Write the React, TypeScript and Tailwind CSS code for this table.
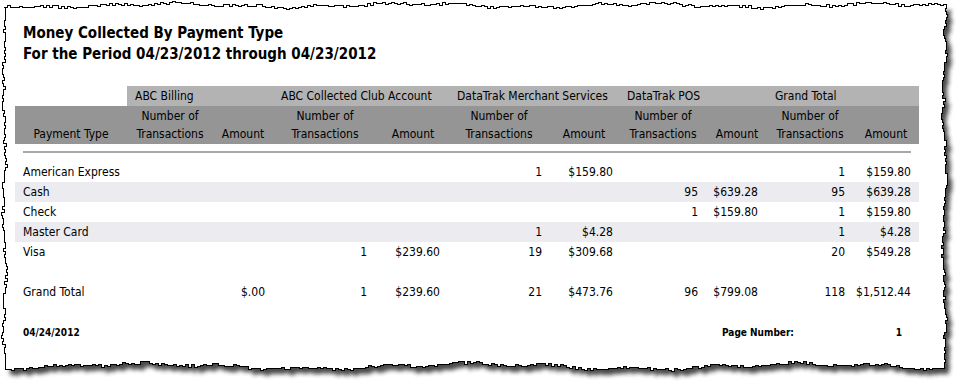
import React from "react";

const font = { fontFamily: "'DejaVu Sans Condensed', 'DejaVu Sans', sans-serif" };

// column grid shared by header, rows and totals
const grid =
  "grid grid-cols-[112px_86px_60px_104px_72px_100px_70px_88px_60px_86px_66px]";

// right padding of each data column so numbers line up with the print
const pad = [
  "pl-2",
  "pr-2",
  "pr-2",
  "pr-[10px]",
  "pr-[9px]",
  "pr-[7px]",
  "pr-[6px]",
  "pr-[9px]",
  "pr-[9px]",
  "pr-2",
  "pr-2",
];

type Row = { label: string; cells: string[]; shaded?: boolean };

const rows: Row[] = [
  { label: "American Express", cells: ["", "", "", "", "1", "$159.80", "", "", "1", "$159.80"] },
  { label: "Cash", cells: ["", "", "", "", "", "", "95", "$639.28", "95", "$639.28"], shaded: true },
  { label: "Check", cells: ["", "", "", "", "", "", "1", "$159.80", "1", "$159.80"] },
  { label: "Master Card", cells: ["", "", "", "", "1", "$4.28", "", "", "1", "$4.28"], shaded: true },
  { label: "Visa", cells: ["", "", "1", "$239.60", "19", "$309.68", "", "", "20", "$549.28"] },
];

const total: Row = {
  label: "Grand Total",
  cells: ["", "$.00", "1", "$239.60", "21", "$473.76", "96", "$799.08", "118", "$1,512.44"],
};

const groups = [
  "ABC Billing",
  "ABC Collected Club Account",
  "DataTrak Merchant Services",
  "DataTrak POS",
  "Grand Total",
];

function rnd(i: number) {
  const x = Math.sin(i * 127.1 + 311.7) * 43758.5453;
  return x - Math.floor(x);
}

// torn paper outline, stair-stepped like the captured edge
function tornPath() {
  const pts: [number, number][] = [];
  let i = 0;
  for (let x = 4; x <= 944; x += 3) {
    const y = 5 + 1.6 * Math.sin(x / 37) + 1.1 * Math.sin(x / 11 + 1) + (rnd(i++) - 0.5) * 2.6;
    pts.push([x, Math.round(y)]);
  }
  for (let y = 8; y <= 362; y += 3) {
    const x = 944 + 1.4 * Math.sin(y / 23) + 0.8 * Math.sin(y / 7) + (rnd(i++) - 0.5) * 2.6;
    pts.push([Math.round(x), y]);
  }
  for (let x = 944; x >= 4; x -= 3) {
    const y = 366 + 2.4 * Math.sin(x / 53 + 2) + 1.4 * Math.sin(x / 13) + (rnd(i++) - 0.5) * 2.8;
    pts.push([x, Math.round(y)]);
  }
  for (let y = 362; y >= 8; y -= 3) {
    const x = 4 + 1.2 * Math.sin(y / 19) + 0.8 * Math.sin(y / 6) + (rnd(i++) - 0.5) * 2.6;
    pts.push([Math.round(x), y]);
  }
  let d = `M${pts[0][0]} ${pts[0][1]}`;
  for (let k = 1; k < pts.length; k++) {
    const py = pts[k - 1][1];
    const [x, y] = pts[k];
    d += ` L${x} ${py} L${x} ${y}`;
  }
  return d + " Z";
}

function DataRow({ row }: { row: Row }) {
  return (
    <div className={`${grid} h-5 items-center ${row.shaded ? "bg-[#ebebf0]" : ""}`}>
      <div className={pad[0]}>{row.label}</div>
      {row.cells.map((c, i) => (
        <div key={i} className={`text-right ${pad[i + 1]}`}>
          {c}
        </div>
      ))}
    </div>
  );
}

export default function App() {
  const d = React.useMemo(tornPath, []);
  return (
    <div className="relative w-[959px] h-[383px] overflow-hidden bg-white text-black" style={font}>
      <svg className="absolute inset-0" width="959" height="383" viewBox="0 0 959 383">
        <defs>
          <filter id="shade" x="-5%" y="-5%" width="110%" height="115%">
            <feGaussianBlur stdDeviation="2.2" />
          </filter>
        </defs>
        <path d={d} transform="translate(5 6)" fill="#2a2a2a" opacity="0.85" filter="url(#shade)" />
        <path d={d} fill="#ffffff" stroke="#000000" strokeWidth="1" shapeRendering="crispEdges" />
      </svg>

      <div className="relative">
        {/* report title */}
        <div className="pl-[23px] pt-[23px] text-[15px] font-bold leading-[21px]">
          <div>Money Collected By Payment Type</div>
          <div>For the Period 04/23/2012 through 04/23/2012</div>
        </div>

        <div className="ml-[15px] mt-[21px] w-[904px] text-[12px]">
          {/* group headings */}
          <div className={`${grid} h-5 items-center`}>
            <div />
            {groups.map((g) => (
              <div key={g} className="col-span-2 bg-[#b3b3b3] h-5 flex items-center pl-2 whitespace-nowrap">
                {g}
              </div>
            ))}
          </div>

          {/* column headings */}
          <div className={`${grid} h-[38px] bg-[#959595] items-end py-px leading-[18px] text-center`}>
            <div>Payment Type</div>
            {groups.map((g) => (
              <React.Fragment key={g}>
                <div>
                  Number of
                  <br />
                  Transactions
                </div>
                <div>Amount</div>
              </React.Fragment>
            ))}
          </div>

          <div className="mx-2 mt-[7px] h-[2px] bg-[#a8a8a8]" />

          <div className="mt-[9px]">
            {rows.map((r) => (
              <DataRow key={r.label} row={r} />
            ))}
          </div>

          <div className="mt-5">
            <DataRow row={total} />
          </div>

          {/* page footer */}
          <div className="mt-5 h-5 flex items-center justify-between pl-2 pr-[17px] text-[10px] font-bold">
            <div>04/24/2012</div>
            <div className="w-[180px] flex justify-between">
              <span>Page Number:</span>
              <span>1</span>
            </div>
          </div>
        </div>
      </div>
    </div>
  );
}
